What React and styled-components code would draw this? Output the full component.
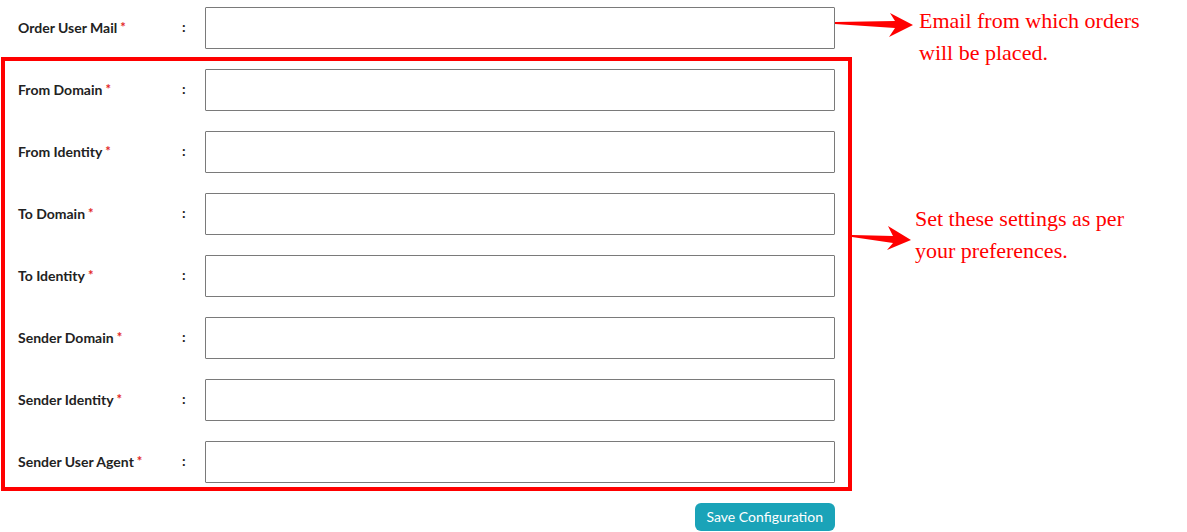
import React from "react";
import styled, { createGlobalStyle } from "styled-components";

const GlobalStyle = createGlobalStyle`
  html, body {
    margin: 0;
    padding: 0;
    background: #ffffff;
  }
  body {
    font-family: Lato, "Open Sans", sans-serif;
    color: #222222;
  }
`;

const boxedFields = [
  "From Domain",
  "From Identity",
  "To Domain",
  "To Identity",
  "Sender Domain",
  "Sender Identity",
  "Sender User Agent",
];

const Arrow = ({ width, tailTop, tailBottom, tipY }) => (
  <svg width={width} height="24" viewBox={`0 0 ${width} 24`}>
    <polygon
      fill="#ff0000"
      points={`0,${tailTop} ${width - 18},${tipY - 4} ${width - 23},0 ${width},${tipY} ${width - 24},24 ${width - 18},${tipY + 3} 0,${tailBottom}`}
    />
  </svg>
);

const App = () => {
  return (
    <Page>
      <GlobalStyle />
      <Section $height={49}>
        <PlainRow>
          <Field label="Order User Mail" />
        </PlainRow>
        <Callout $top={5}>
          <ArrowWrap $top={8}>
            <Arrow width={78} tailTop={9} tailBottom={11} tipY={12} />
          </ArrowWrap>
          <Note $gap={6}>
            Email from which orders
            <br />
            will be placed.
          </Note>
        </Callout>
      </Section>

      <Section>
        <RedBox>
          {boxedFields.map((name) => (
            <Field key={name} label={name} />
          ))}
        </RedBox>
        <Callout $top={154}>
          <ArrowWrap $top={23}>
            <Arrow width={59} tailTop={9} tailBottom={11} tipY={14} />
          </ArrowWrap>
          <Note $gap={4}>
            Set these settings as per
            <br />
            your preferences.
          </Note>
        </Callout>
      </Section>

      <Actions>
        <SaveButton type="button">Save Configuration</SaveButton>
      </Actions>
    </Page>
  );
};

const Field = ({ label }) => (
  <Row>
    <Label>
      {label}
      <Required>*</Required>
    </Label>
    <Colon>:</Colon>
    <Input type="text" />
  </Row>
);

const Page = styled.div`
  width: 1187px;
  height: 532px;
  overflow: hidden;
  display: flex;
  flex-direction: column;
`;

const Section = styled.div`
  display: flex;
  align-items: flex-start;
  height: ${(p) => (p.$height ? `${p.$height}px` : "auto")};
`;

const PlainRow = styled.div`
  margin-top: 7px;
  padding-left: 18px;
`;

const RedBox = styled.div`
  margin-top: 8px;
  margin-left: 1px;
  border: 4px solid #ff0000;
  padding: 8px 13px 4px 13px;
  display: flex;
  flex-direction: column;
  gap: 20px;
`;

const Row = styled.div`
  display: grid;
  grid-template-columns: 164px 23px 630px;
  align-items: center;
  height: 42px;
`;

const Label = styled.label`
  font-size: 14px;
  line-height: 18px;
  padding-bottom: 2px;
  font-weight: 700;
  color: #222222;
  white-space: nowrap;
`;

const Required = styled.span`
  color: #e22626;
  margin-left: 3px;
  font-size: 13px;
  vertical-align: 1px;
`;

const Colon = styled.span`
  font-size: 14px;
  line-height: 18px;
  padding-bottom: 2px;
  font-weight: 700;
  color: #222222;
`;

const Input = styled.input`
  box-sizing: border-box;
  width: 630px;
  height: 42px;
  margin: 0;
  border: 1px solid #7a7a7a;
  border-radius: 1px;
  background: #fff;
  padding: 0 10px;
  font-family: Lato, sans-serif;
  font-size: 14px;
  outline: none;
`;

const Callout = styled.div`
  display: flex;
  align-items: flex-start;
  margin-top: ${(p) => p.$top}px;
`;

const ArrowWrap = styled.div`
  display: flex;
  margin-top: ${(p) => p.$top}px;
  line-height: 0;
`;

const Note = styled.div`
  margin-left: ${(p) => p.$gap}px;
  font-family: "Liberation Serif", "Times New Roman", serif;
  font-size: 22px;
  line-height: 32px;
  color: #ff0000;
  white-space: nowrap;
`;

const Actions = styled.div`
  width: 835px;
  display: flex;
  justify-content: flex-end;
  margin-top: 12px;
`;

const SaveButton = styled.button`
  height: 28px;
  padding: 0 12px 1px;
  border: none;
  border-radius: 6px;
  background: #1aa3b8;
  color: #ffffff;
  font-family: Lato, sans-serif;
  font-size: 14px;
  cursor: pointer;
`;

export default App;
